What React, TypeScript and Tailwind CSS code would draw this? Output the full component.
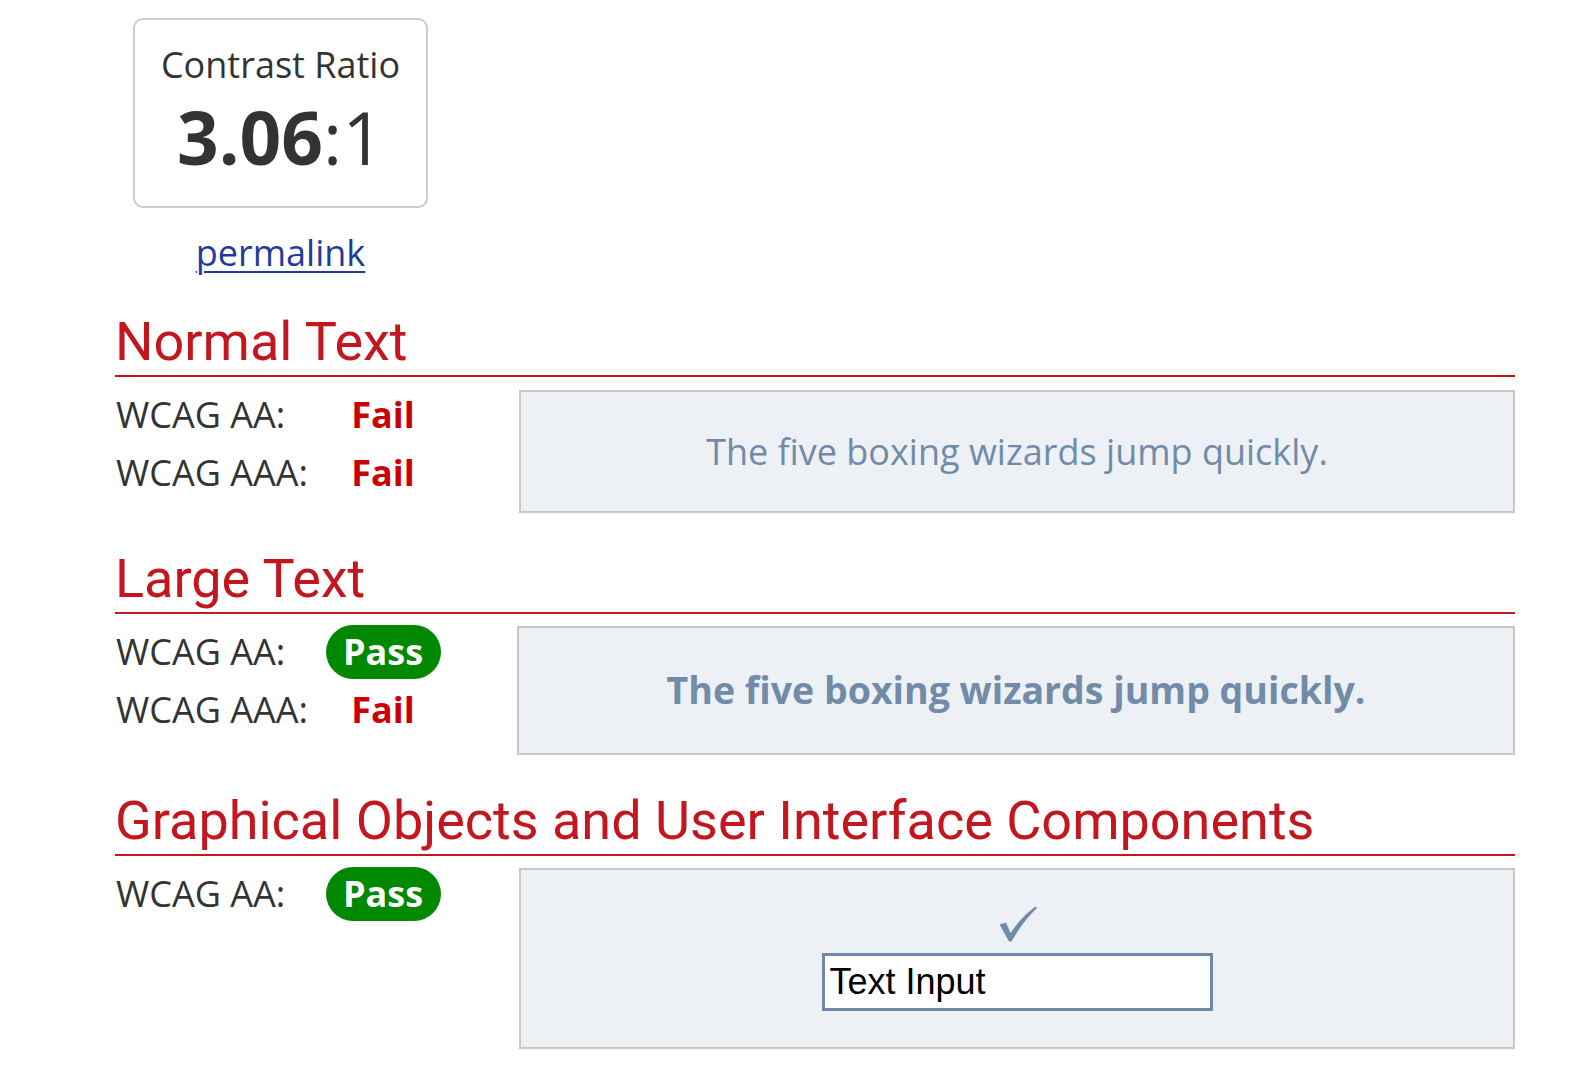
const body = "font-['Open_Sans',_'Liberation_Sans',_sans-serif]"

type Result = "Pass" | "Fail"

function Status({ result }: { result: Result }) {
  if (result === "Pass") {
    return (
      <span className="inline-flex h-[54px] w-[115px] items-center justify-center rounded-full bg-[#008800] text-[36px] font-bold leading-none text-white">
        Pass
      </span>
    )
  }
  return <span className="text-[36px] font-bold text-[#cc0000]">Fail</span>
}

function Row({ label, result }: { label: string; result: Result }) {
  return (
    <div className="flex h-[58px] items-center text-[36px] leading-[58px] text-[#333333]">
      <span className="w-[202px] pl-[1px]">{label}</span>
      <span className="flex w-[132px] justify-center">
        <Status result={result} />
      </span>
    </div>
  )
}

function Heading({ children, className = "" }: { children: React.ReactNode; className?: string }) {
  return (
    <h2
      className={`border-b-2 border-[#c3161f] font-['Roboto',_'Liberation_Sans',_sans-serif] text-[54px] font-normal leading-[67px] text-[#c3161f] ${className}`}
    >
      {children}
    </h2>
  )
}

function CheckMark() {
  return (
    <svg width="38" height="36" viewBox="0 0 38 36" aria-hidden="true">
      <path
        d="M0.5 18.5 L7 16.5 L11.5 27 Q22 11 36.5 0.5 L38 2 Q24.5 14.5 12.5 35.5 L10 35.5 Z"
        fill="#718ba8"
      />
    </svg>
  )
}

export default function App() {
  return (
    <main className={`min-h-screen bg-white ${body}`}>
      <div className="ml-[115px] w-[1400px] pb-[27px]">
        {/* Ratio summary */}
        <div className="ml-[18px] w-[295px]">
          <div className="mt-[18px] flex h-[190px] flex-col items-center rounded-[10px] border-2 border-[#cccccc] pt-[21px] text-[#333333]">
            <p className="text-[36px] leading-[48px]">Contrast Ratio</p>
            <p className="mt-[8px] text-[73px] leading-[80px]">
              <span className="font-bold">3.06</span>:1
            </p>
          </div>
          <div className="mt-[21px] text-center text-[36px] leading-[48px]">
            <a href="#" className="text-[#1f3b9e] underline decoration-2 underline-offset-[5px]">
              permalink
            </a>
          </div>
        </div>

        {/* Normal Text */}
        <Heading className="mt-[31px]">Normal Text</Heading>
        <div className="flex items-start pt-[9px]">
          <div className="w-[404px]">
            <Row label="WCAG AA:" result="Fail" />
            <Row label="WCAG AAA:" result="Fail" />
          </div>
          <div className="mt-[4px] flex h-[123px] flex-1 items-center justify-center border-2 border-[#c8c8c8] bg-[#edf1f6]">
            <p className="text-[36px] text-[#718ba8]">The five boxing wizards jump quickly.</p>
          </div>
        </div>

        {/* Large Text */}
        <Heading className="mt-[32px]">Large Text</Heading>
        <div className="flex items-start pt-[9px]">
          <div className="w-[402px]">
            <Row label="WCAG AA:" result="Pass" />
            <Row label="WCAG AAA:" result="Fail" />
          </div>
          <div className="mt-[3px] flex h-[129px] flex-1 items-center justify-center border-2 border-[#c8c8c8] bg-[#edf1f6]">
            <p className="text-[37.5px] font-bold text-[#718ba8]">The five boxing wizards jump quickly.</p>
          </div>
        </div>

        {/* Graphical Objects */}
        <Heading className="mt-[32px]">Graphical Objects and User Interface Components</Heading>
        <div className="flex items-start pt-[9px]">
          <div className="w-[404px]">
            <Row label="WCAG AA:" result="Pass" />
          </div>
          <div className="mt-[3px] flex h-[181px] flex-1 flex-col items-center justify-center border-2 border-[#c8c8c8] bg-[#edf1f6]">
            <div className="pl-[2px]">
              <CheckMark />
            </div>
            <input
              type="text"
              readOnly
              value="Text Input"
              className="mt-[11px] h-[58px] w-[391px] border-[3px] border-[#6f89a7] bg-white px-[5px] font-['Liberation_Sans',_Arial,_sans-serif] text-[36px] text-black outline-none"
            />
          </div>
        </div>
      </div>
    </main>
  )
}
